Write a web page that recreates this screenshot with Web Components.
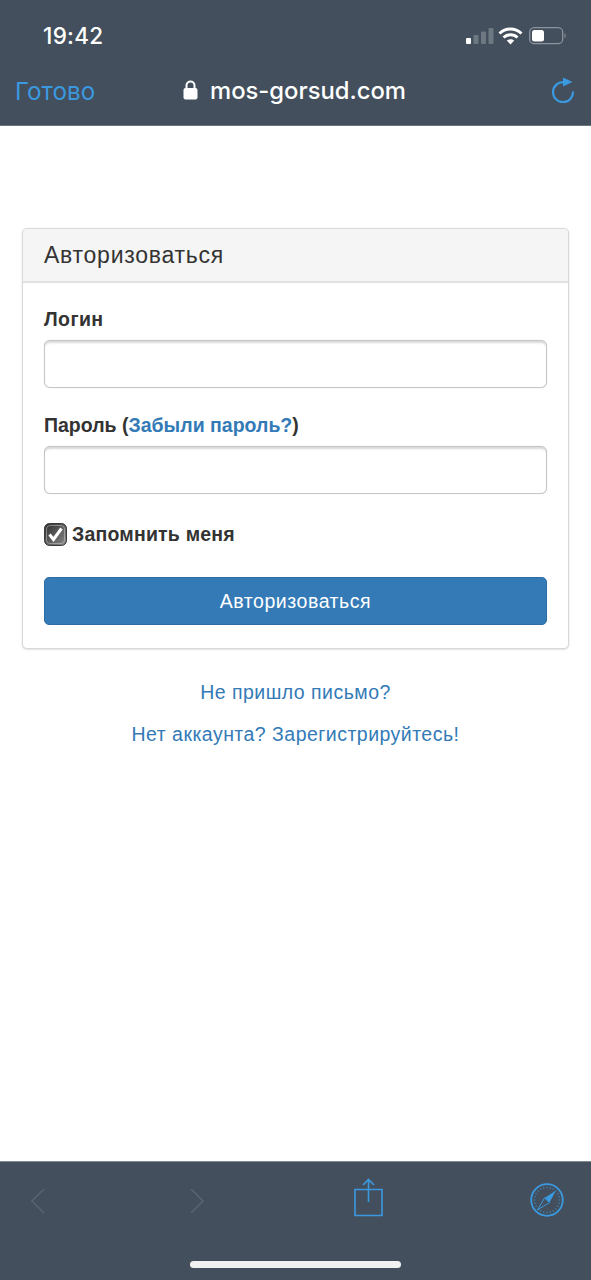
<!DOCTYPE html>
<html>
<head>
<meta charset="utf-8">
<title>mos-gorsud.com</title>
<style>
html, body { margin: 0; padding: 0; background: #fff; }
body { width: 591px; height: 1280px; overflow: hidden; display: flex; flex-direction: column; font-family: "Liberation Sans", Arial, sans-serif; color: #333; }
</style>
</head>
<body>
<browser-top host-name="mos-gorsud.com" done-label="Готово" time="19:42"></browser-top>
<login-page>
  <login-panel title-text="Авторизоваться">
    <form-field label="Логин" style="letter-spacing: .4px"></form-field>
    <form-field>
      <span slot="label">Пароль (<a>Забыли пароль?</a>)</span>
    </form-field>
    <remember-check>Запомнить меня</remember-check>
    <primary-button>Авторизоваться</primary-button>
  </login-panel>
  <page-link>Не пришло письмо?</page-link>
  <page-link>Нет аккаунта? Зарегистрируйтесь!</page-link>
</login-page>
<browser-bottom></browser-bottom>

<script>
class BrowserTop extends HTMLElement {
    constructor() {
        super();
        const shadow = this.attachShadow({ mode: "open" });
        shadow.innerHTML = /*html*/`
        <style>
        :host {
            display: block;
            flex: none;
            height: 125px;
            background: #434f5c;
            border-bottom: 1px solid #6a7480;
            font-family: Inter, "Noto Sans", sans-serif;
        }
        .status {
            height: 69px;
            display: flex;
            align-items: flex-start;
            justify-content: space-between;
            padding: 22px 24px 0 43px;
            box-sizing: border-box;
        }
        .time { color: #fff; font-size: 22.5px; line-height: 28px; font-weight: 500; letter-spacing: 0.3px; }
        .icons { display: flex; align-items: center; gap: 6px; padding-top: 5px; }
        .nav {
            height: 42px;
            display: flex;
            align-items: center;
            justify-content: space-between;
            padding: 0 16px 0 15px;
            position: relative;
        }
        .done { color: #3b99e0; font-size: 24.2px; width: 110px; padding-top: 2px; }
        .host { color: #fff; font-size: 23.8px; font-weight: 500; display: flex; align-items: center; gap: 12px; margin-left: -1px; }
        .reload { width: 110px; display: flex; justify-content: flex-end; }
        </style>
        <div class="status">
            <span class="time"></span>
            <div class="icons">
                <svg width="32" height="18" viewBox="0 0 32 18" style="margin-right:1px">
                    <rect x="0" y="11" width="5" height="6" rx="1" fill="#fff"/>
                    <rect x="7.5" y="8" width="5" height="9" rx="1" fill="#6e7883"/>
                    <rect x="15" y="4.5" width="5" height="12.5" rx="1" fill="#6e7883"/>
                    <rect x="22.5" y="1" width="5" height="16" rx="1" fill="#6e7883"/>
                </svg>
                <svg width="25" height="18" viewBox="0 0 25 18" style="margin-left:-7px">
                    <path d="M1.5 6.5C8 0.5 17 0.5 23.5 6.5" fill="none" stroke="#fff" stroke-width="3"/>
                    <path d="M5.5 10.5C9.5 6.8 15.5 6.8 19.5 10.5" fill="none" stroke="#fff" stroke-width="3"/>
                    <path d="M8.8 13.6C11 11.7 14 11.7 16.2 13.6L12.5 17.5Z" fill="#fff"/>
                </svg>
                <svg width="38" height="18" viewBox="0 0 38 18">
                    <rect x="0.7" y="0.7" width="33" height="16" rx="4.5" fill="none" stroke="#8b939c" stroke-width="1.3"/>
                    <rect x="3" y="3" width="12" height="11.5" rx="2.5" fill="#fff"/>
                    <path d="M35.5 6.5C37 7 37 10.5 35.5 11Z" fill="#8b939c"/>
                </svg>
            </div>
        </div>
        <div class="nav">
            <span class="done"></span>
            <span class="host">
                <svg width="15" height="20" viewBox="0 0 15 20">
                    <path d="M3.5 9V5.5a4 4 0 0 1 8 0V9" fill="none" stroke="#fff" stroke-width="2"/>
                    <rect x="0.5" y="8" width="14" height="11.5" rx="2" fill="#fff"/>
                </svg>
                <span class="name"></span>
            </span>
            <span class="reload">
                <svg width="24" height="26" viewBox="0 0 24 26">
                    <path d="M12.5 5.2A10 10 0 1 0 22 14.5" fill="none" stroke="#3b99e0" stroke-width="2.2"/>
                    <path d="M12 0.5L21.5 5L12 9.5Z" fill="#3b99e0"/>
                </svg>
            </span>
        </div>
        `;
    }

    connectedCallback() {
        const shadow = this.shadowRoot;
        shadow.querySelector(".time").textContent = this.getAttribute("time");
        shadow.querySelector(".done").textContent = this.getAttribute("done-label");
        shadow.querySelector(".name").textContent = this.getAttribute("host-name");
    }
}
window.customElements.define("browser-top", BrowserTop);

class LoginPage extends HTMLElement {
    constructor() {
        super();
        const shadow = this.attachShadow({ mode: "open" });
        shadow.innerHTML = /*html*/`
        <style>
        :host {
            display: flex;
            flex-direction: column;
            flex: 1;
            padding: 102px 22px 0;
            background: #fff;
        }
        </style>
        <slot></slot>
        `;
    }
}
window.customElements.define("login-page", LoginPage);

class LoginPanel extends HTMLElement {
    constructor() {
        super();
        const shadow = this.attachShadow({ mode: "open" });
        shadow.innerHTML = /*html*/`
        <style>
        :host {
            display: block;
            width: 547px;
            box-sizing: border-box;
            height: 421px;
            margin-bottom: 29px;
            border: 1px solid #d9d9d9;
            border-radius: 5px;
            box-shadow: 0 1px 2px rgba(0, 0, 0, .1), 0 0 1px rgba(0, 0, 0, .12);
            background: #fff;
        }
        .head {
            height: 54px;
            box-sizing: border-box;
            padding-left: 21px;
            display: flex;
            align-items: center;
            font-size: 23px;
            letter-spacing: .75px;
            color: #333;
            background: #f5f5f5;
            border-bottom: 2px solid #e2e2e2;
            border-radius: 4px 4px 0 0;
        }
        .body {
            padding: 22px 21px 0;
            display: flex;
            flex-direction: column;
        }
        </style>
        <div class="head"></div>
        <div class="body"><slot></slot></div>
        `;
    }

    connectedCallback() {
        this.shadowRoot.querySelector(".head").textContent = this.getAttribute("title-text");
    }
}
window.customElements.define("login-panel", LoginPanel);

class FormField extends HTMLElement {
    constructor() {
        super();
        const shadow = this.attachShadow({ mode: "open" });
        shadow.innerHTML = /*html*/`
        <style>
        :host {
            display: block;
            margin-bottom: 23px;
        }
        .label {
            display: block;
            height: 28px;
            line-height: 28px;
            margin-bottom: 7px;
            font-size: 19.5px;
            font-weight: bold;
            color: #333;
        }
        .box {
            height: 48px;
            box-sizing: border-box;
            border: 1px solid #c6c6c6;
            border-radius: 6px;
            background: #fff;
            box-shadow: inset 0 3px 2px -1px rgba(0, 0, 0, .15), 0 0 1px rgba(0, 0, 0, .22);
        }
        </style>
        <span class="label"><slot name="label"><span class="text"></span></slot></span>
        <div class="box"></div>
        `;
    }

    connectedCallback() {
        this.shadowRoot.querySelector(".text").textContent = this.getAttribute("label") || "";
    }
}
window.customElements.define("form-field", FormField);

class RememberCheck extends HTMLElement {
    constructor() {
        super();
        const shadow = this.attachShadow({ mode: "open" });
        shadow.innerHTML = /*html*/`
        <style>
        :host {
            display: flex;
            align-items: center;
            gap: 5px;
            height: 28px;
            font-size: 19.5px;
            font-weight: bold;
            letter-spacing: .2px;
            color: #333;
            margin-top: 3px;
            margin-bottom: 29px;
        }
        svg { flex: none; }
        </style>
        <svg width="23" height="23" viewBox="0 0 23 23">
            <defs>
                <linearGradient id="chk" x1="0" y1="0" x2="1" y2="1">
                    <stop offset="0" stop-color="#2c2c2c"/>
                    <stop offset="1" stop-color="#8a8a8a"/>
                </linearGradient>
            </defs>
            <rect x="0.5" y="0.5" width="22" height="22" rx="5" fill="url(#chk)" stroke="#3a3a3a"/>
            <rect x="2.5" y="2.5" width="18" height="18" rx="3.5" fill="none" stroke="#e8e8e8" stroke-opacity=".4"/>
            <path d="M5.5 11.5L9.5 16.5L17.5 5.5" fill="none" stroke="#fff" stroke-width="3"/>
        </svg>
        <span><slot></slot></span>
        `;
    }
}
window.customElements.define("remember-check", RememberCheck);

class PrimaryButton extends HTMLElement {
    constructor() {
        super();
        const shadow = this.attachShadow({ mode: "open" });
        shadow.innerHTML = /*html*/`
        <style>
        :host {
            display: flex;
            align-items: center;
            justify-content: center;
            height: 48px;
            box-sizing: border-box;
            padding-top: 1px;
            background: #337ab7;
            border: 1px solid #2e6da4;
            border-radius: 5px;
            color: #fff;
            font-size: 19.5px;
            letter-spacing: .55px;
        }
        </style>
        <slot></slot>
        `;
    }
}
window.customElements.define("primary-button", PrimaryButton);

class PageLink extends HTMLElement {
    constructor() {
        super();
        const shadow = this.attachShadow({ mode: "open" });
        shadow.innerHTML = /*html*/`
        <style>
        :host {
            display: block;
            text-align: center;
            height: 28px;
            line-height: 28px;
            margin-bottom: 14px;
            font-size: 19.5px;
            letter-spacing: .47px;
            color: #337ab7;
        }
        </style>
        <slot></slot>
        `;
    }
}
window.customElements.define("page-link", PageLink);

class BrowserBottom extends HTMLElement {
    constructor() {
        super();
        const shadow = this.attachShadow({ mode: "open" });
        let ticks = "";
        for (let i = 0; i < 24; i++) {
            const a = i * Math.PI / 12;
            const x1 = (17 + 13.5 * Math.cos(a)).toFixed(2);
            const y1 = (17 + 13.5 * Math.sin(a)).toFixed(2);
            const x2 = (17 + 11.5 * Math.cos(a)).toFixed(2);
            const y2 = (17 + 11.5 * Math.sin(a)).toFixed(2);
            ticks += `<line x1="${x1}" y1="${y1}" x2="${x2}" y2="${y2}"/>`;
        }
        shadow.innerHTML = /*html*/`
        <style>
        :host {
            display: block;
            flex: none;
            height: 119px;
            box-sizing: border-box;
            background: #434f5c;
            border-top: 1px solid #808a96;
            position: relative;
        }
        .tools {
            height: 78px;
            display: flex;
            align-items: center;
            padding: 0 27px 0 30px;
            box-sizing: border-box;
        }
        .slot-a { width: 160px; }
        .slot-b { width: 164px; }
        .slot-c { flex: 1; }
        .tools div { display: flex; }
        .home {
            position: absolute;
            left: 190px;
            top: 99px;
            width: 211px;
            height: 7px;
            background: #f1f1f1;
            border-radius: 4px;
        }
        </style>
        <div class="tools">
            <div class="slot-a">
                <svg width="15" height="26" viewBox="0 0 15 26"><path d="M14 1L2 13L14 25" fill="none" stroke="#566270" stroke-width="1.7"/></svg>
            </div>
            <div class="slot-b">
                <svg width="15" height="26" viewBox="0 0 15 26"><path d="M1 1L13 13L1 25" fill="none" stroke="#566270" stroke-width="1.7"/></svg>
            </div>
            <div class="slot-c">
                <svg width="29" height="39" viewBox="0 0 29 39" style="margin-top:-7px">
                    <path d="M1 11.5H28V37.5H1ZM14.5 24V1.5M9 7L14.5 1.5L20 7" fill="none" stroke="#3b99e0" stroke-width="1.6"/>
                </svg>
            </div>
            <div>
                <svg width="34" height="34" viewBox="0 0 34 34" style="margin-top:-3px">
                    <circle cx="17" cy="17" r="15.8" fill="none" stroke="#3b99e0" stroke-width="1.8"/>
                    <g stroke="#3b99e0" stroke-width="1" opacity=".7">${ticks}</g>
                    <path d="M26 7.5L14.5 15L19.5 19.5Z" fill="#3b99e0"/>
                    <path d="M7.5 27L14.5 15L19.5 19.5Z" fill="none" stroke="#3b99e0" stroke-width="1"/>
                </svg>
            </div>
        </div>
        <div class="home"></div>
        `;
    }
}
window.customElements.define("browser-bottom", BrowserBottom);

// link colour inside the slotted password label
document.querySelectorAll("form-field a").forEach(a => { a.style.color = "#337ab7"; });
</script>
</body>
</html>
